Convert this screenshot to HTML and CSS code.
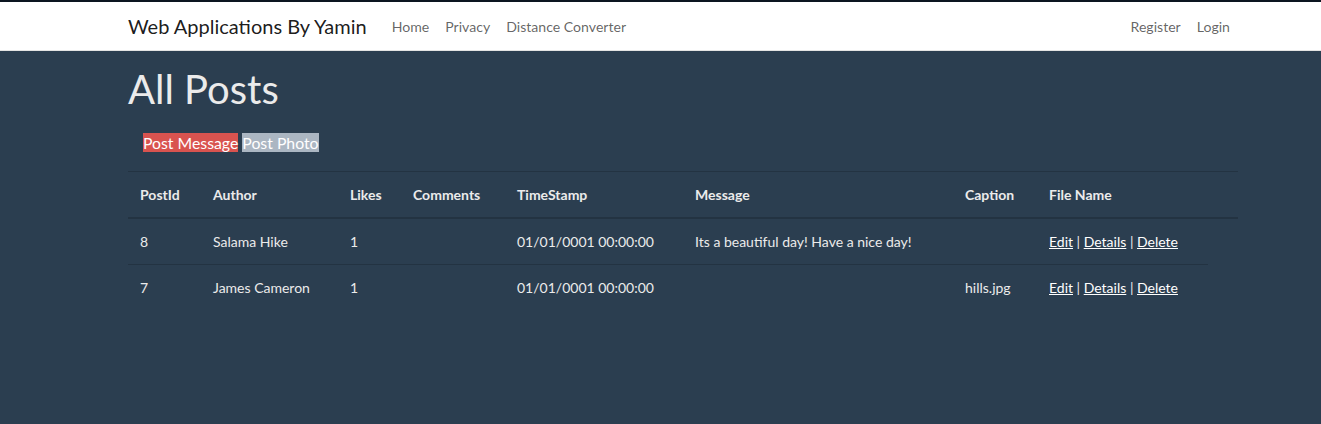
FILE: index.html
```html
<!DOCTYPE html>
<html lang="en">
<head>
<meta charset="utf-8">
<title>All Posts</title>
<link rel="stylesheet" href="styles.css">
</head>
<body>
<div class="topline"></div>
<header class="navbar">
  <div class="container nav-inner">
    <a class="brand" href="#">Web Applications By Yamin</a>
    <ul class="nav-links">
      <li><a href="#">Home</a></li>
      <li><a href="#">Privacy</a></li>
      <li><a href="#">Distance Converter</a></li>
    </ul>
    <ul class="nav-links nav-right">
      <li><a href="#">Register</a></li>
      <li><a href="#">Login</a></li>
    </ul>
  </div>
</header>
<main class="container">
  <h1 class="title">All Posts</h1>
  <p class="actions"><a class="btn-msg" href="#">Post Message</a> <a class="btn-photo" href="#">Post Photo</a></p>
  <table class="posts">
    <thead>
      <tr>
        <th class="c1">PostId</th>
        <th class="c2">Author</th>
        <th class="c3">Likes</th>
        <th class="c4">Comments</th>
        <th class="c5">TimeStamp</th>
        <th class="c6">Message</th>
        <th class="c7">Caption</th>
        <th class="c8">File Name</th>
        <th class="c9"></th>
      </tr>
    </thead>
    <tbody>
      <tr>
        <td>8</td>
        <td>Salama Hike</td>
        <td>1</td>
        <td></td>
        <td>01/01/0001 00:00:00</td>
        <td>Its a beautiful day! Have a nice day!</td>
        <td></td>
        <td class="ops"><a href="#">Edit</a> | <a href="#">Details</a> | <a href="#">Delete</a></td>
      </tr>
      <tr>
        <td>7</td>
        <td>James Cameron</td>
        <td>1</td>
        <td></td>
        <td>01/01/0001 00:00:00</td>
        <td></td>
        <td>hills.jpg</td>
        <td class="ops"><a href="#">Edit</a> | <a href="#">Details</a> | <a href="#">Delete</a></td>
      </tr>
    </tbody>
  </table>
</main>
</body>
</html>
```
FILE: styles.css
```css
* { box-sizing: border-box; }
html, body { margin: 0; }
body {
  background: #2b3e50;
  color: #ebebeb;
  font-family: Lato, "Open Sans", sans-serif;
  font-size: 15px;
  line-height: 1.5;
  min-height: 424px;
}
.topline { height: 2px; background: #0c1520; }
.container { width: 1110px; margin-left: 128px; }
.navbar {
  background: #fff;
  border-bottom: 1px solid #e3e3e3;
  height: 49px;
}
.nav-inner { display: flex; align-items: center; height: 48px; }
.brand {
  color: rgba(0,0,0,0.9);
  font-size: 20px;
  text-decoration: none;
  margin-right: 17px;
  margin-top: -1px;
}
.nav-links { list-style: none; display: flex; margin: 1px 0 0 0; padding: 0; gap: 0; }
.nav-links a {
  display: block;
  padding: 0 8px;
  color: rgba(0,0,0,0.62);
  font-size: 14.1px;
  text-decoration: none;
}
.nav-right { margin-left: auto; margin-right: 0; }
.title {
  font-size: 40px;
  font-weight: 400;
  line-height: 48px;
  margin: 14px 0 0 0;
  color: #ebebeb;
}
.actions { margin: 20px 0 0 15px; font-size: 15.8px; line-height: 19px; }
.actions a { color: #fff; text-decoration: none; }
.btn-msg { background: #d9534f; }
.btn-photo { background: #abb6c2; }
.posts {
  border-collapse: collapse;
  width: 1110px;
  margin-top: 19px;
  font-size: 14px;
  table-layout: fixed;
}
.posts th, .posts td {
  padding: 12px;
  text-align: left;
  vertical-align: top;
  line-height: 21px;
  border-top: 1px solid rgba(0,0,0,0.17);
}
.posts th { font-weight: 700; border-bottom: 2px solid rgba(0,0,0,0.17); }
.posts td a { color: #fff; text-decoration: underline; }
.c1 { width: 73px; }
.c2 { width: 137px; }
.c3 { width: 63px; }
.c4 { width: 104px; }
.c5 { width: 178px; }
.c6 { width: 270px; }
.c7 { width: 84px; }
.c8 { width: 171px; }
.c9 { width: 30px; }
```
